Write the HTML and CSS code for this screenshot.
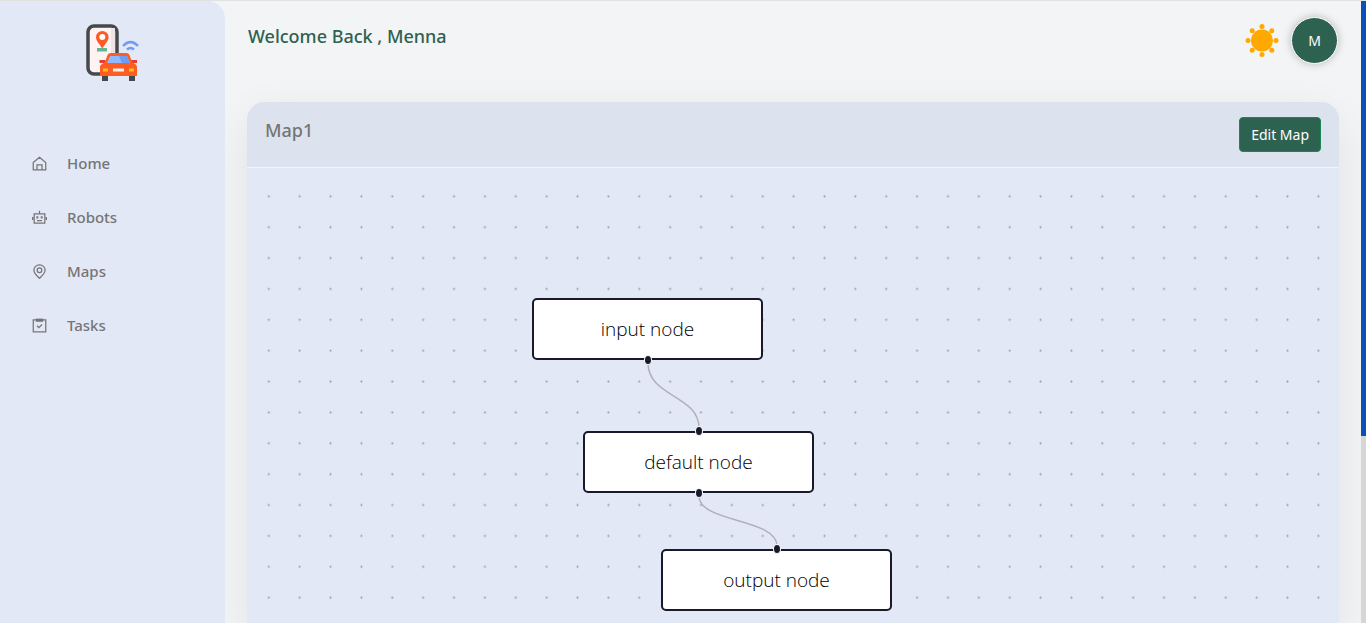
FILE: index.html
```html
<!DOCTYPE html>
<html lang="en">
<head>
<meta charset="utf-8">
<meta name="viewport" content="width=device-width, initial-scale=1">
<title>Map1</title>
<link rel="stylesheet" href="styles.css">
</head>
<body>
<div class="app">
  <aside class="sidebar">
    <a class="logo" href="#" aria-label="Dashboard">
      <svg width="54" height="58" viewBox="0 0 54 58">
        <rect x="2" y="2" width="29" height="48" rx="6" fill="#fdf3f3" stroke="#444a4b" stroke-width="3.500"/>
        <path d="M25 4h4v44h-4z" fill="#eee4e6"/>
        <rect x="11" y="24" width="10" height="3.500" fill="#5cb898"/>
        <path d="M16.300 24.500C13 19 10 17 10 13.200a6.300 6.300 0 0 1 12.600 0c0 3.800-3 5.800-6.300 11.300z" fill="#fd5a25"/>
        <circle cx="16.300" cy="13" r="3" fill="#fff"/>
        <path d="M37 22q7.500-8 15 0M41 25.500q3.500-3 7 0" fill="none" stroke="#7199f6" stroke-width="2.500"/>
        <rect x="16" y="48" width="6" height="9" fill="#444a4b"/>
        <rect x="43" y="48" width="6" height="9" fill="#444a4b"/>
        <path d="M13.500 36h6v3h-6zM45 36h6v3h-6z" fill="#e63f32"/>
        <path d="M16 40l3-2 2.500-7q1-2 3-2h16q2 0 3 2l2.500 7 3 2q2 1 2 3v9H14v-9q0-2 2-3z" fill="#fd5d20"/>
        <path d="M21 39l2.500-6q.5-1 1.500-1h15q1 0 1.500 1l2.500 6z" fill="#8fbaff"/>
        <path d="M33 32h7q1 0 1.500 1l2.500 6H36z" fill="#6d9cf7"/>
        <path d="M17 44.500h5v3h-5zM43 44.500h5v3h-5z" fill="#ffbd18"/>
        <rect x="27" y="44.500" width="11" height="3" fill="#fff0ed"/>
      </svg>
    </a>
    <nav class="menu">
      <a class="menu-item" href="#">
        <svg class="icon" viewBox="0 0 24 24"><path d="M2 10.500 12 2l10 8.500V22H2zM8 22v-8h8v8"/></svg>
        Home</a>
      <a class="menu-item" href="#">
        <svg class="icon" viewBox="0 0 24 24"><path d="M3.500 6h17v15h-17zM12 6V1M1 11v5M23 11v5M8 17h8"/><path class="solid" d="M7 10h3v3.500H7zM14 10h3v3.500h-3z"/></svg>
        Robots</a>
      <a class="menu-item" href="#">
        <svg class="icon" viewBox="0 0 24 24"><path d="M12 23C7 18 3 14.500 3 9.800a9 8.500 0 0 1 18 0C21 14.500 17 18 12 23z"/><circle cx="12" cy="10" r="3.700"/></svg>
        Maps</a>
      <a class="menu-item" href="#">
        <svg class="icon" viewBox="0 0 24 24"><path d="M2 3h20v19H2zM8 12.500l3 3 5-5"/><path class="solid" d="M6 1h12v5H6z"/></svg>
        Tasks</a>
    </nav>
  </aside>
  <main class="content">
    <header class="topbar">
      <h1 class="welcome">Welcome Back , Menna</h1>
      <div class="actions">
        <button class="theme" type="button" aria-label="Toggle theme">
          <svg width="34" height="34" viewBox="0 0 34 34" fill="#ffa800">
            <circle cx="17" cy="16.500" r="11"/>
            <circle cx="17" cy="2.500" r="2.500"/><circle cx="17" cy="30.500" r="2.500"/>
            <circle cx="3" cy="16.500" r="2.500"/><circle cx="31" cy="16.500" r="2.500"/>
            <circle cx="7.200" cy="6.700" r="2.500"/><circle cx="26.800" cy="6.700" r="2.500"/>
            <circle cx="7.200" cy="26.300" r="2.500"/><circle cx="26.800" cy="26.300" r="2.500"/>
          </svg>
        </button>
        <button class="avatar" type="button">M</button>
      </div>
    </header>
    <section class="card">
      <div class="card-head">
        <h2 class="card-title">Map1</h2>
        <button class="edit" type="button">Edit Map</button>
      </div>
      <div class="canvas">
        <svg class="layer" width="100%" height="100%">
          <defs>
            <pattern id="dots" x="6.400" y="12.900" width="30.870" height="30.870" patternUnits="userSpaceOnUse">
              <circle cx="15.430" cy="15.430" r="1" fill="#9494a3"/>
            </pattern>
          </defs>
          <rect width="100%" height="100%" fill="url(#dots)"/>
          <g fill="none" stroke="#b1b1b7" stroke-width="1.500">
            <path d="M401 195C401 229 452 227 452 260"/>
            <path d="M452 328C452 355 530 350 530 378"/>
          </g>
        </svg>
        <div class="node node-input">input node<span class="handle handle-bottom"></span></div>
        <div class="node node-default"><span class="handle handle-top"></span>default node<span class="handle handle-bottom"></span></div>
        <div class="node node-output"><span class="handle handle-top"></span>output node</div>
      </div>
    </section>
  </main>
  <div class="scroll-track"><div class="scroll-thumb"></div></div>
</div>
</body>
</html>
```
FILE: styles.css
```css
* { box-sizing: border-box; }

body {
  margin: 0;
  background: #f2f4f6;
  color: #757575;
  font-family: "Noto Sans", "Open Sans", sans-serif;
}

button { font: inherit; cursor: pointer; }

.app {
  display: flex;
  height: 100vh;
  overflow: hidden;
  border-top: 1px solid #e0e2df;
}

.sidebar {
  flex: 0 0 225px;
  background: #e2e8f6;
  border-top-right-radius: 18px;
  z-index: 1;
}

.logo {
  display: flex;
  justify-content: center;
  padding-top: 23px;
}

.menu {
  display: flex;
  flex-direction: column;
  gap: 30px;
  padding: 69px 32px 0;
}

.menu-item {
  display: flex;
  align-items: center;
  gap: 20px;
  color: inherit;
  font-size: 15px;
  font-weight: 500;
  line-height: 24px;
  text-decoration: none;
}

.icon {
  width: 15px;
  height: 15px;
  fill: none;
  stroke: #757575;
  stroke-width: 2;
}

.icon .solid { fill: #757575; stroke: none; }

.content {
  flex: 1;
  min-width: 0;
  display: flex;
  flex-direction: column;
  gap: 38px;
  padding: 16px 22px 0;
}

.topbar {
  display: flex;
  justify-content: space-between;
  padding: 0 1px;
}

.welcome {
  margin: 7px 0;
  color: #2d6250;
  font-size: 18px;
  font-weight: 500;
  line-height: 24px;
}

.actions {
  display: flex;
  align-items: center;
  gap: 12px;
}

.theme {
  display: flex;
  padding: 0;
  border: 0;
  background: none;
}

.avatar {
  width: 47px;
  height: 47px;
  padding: 0;
  border: 1px solid #fff;
  border-radius: 50%;
  background: #2d6250;
  box-shadow: 0 0 8px rgba(0, 0, 0, 0.25);
  color: #fff;
  font-size: 14px;
}

.card {
  flex: 1;
  display: flex;
  flex-direction: column;
  border-radius: 18px 18px 0 0;
  background: #e2e8f6;
  box-shadow: 0 16px 48px rgba(0, 0, 0, 0.08);
}

.card-head {
  display: flex;
  align-items: flex-start;
  justify-content: space-between;
  padding: 15px 18px;
  border-bottom: 1px solid #f2f4fa;
  border-radius: 18px 18px 0 0;
  background: #dde3ee;
}

.card-title {
  margin: 1px 0 0;
  font-size: 18px;
  font-weight: 500;
  line-height: 24px;
}

.edit {
  height: 35px;
  padding: 0 11px;
  border: 1px solid #198754;
  border-radius: 4px;
  background: #2d6250;
  color: #fff;
  font-size: 14px;
}

.canvas {
  position: relative;
  flex: 1;
  overflow: hidden;
}

.layer {
  position: absolute;
  inset: 0;
}

.node {
  position: absolute;
  display: flex;
  align-items: center;
  justify-content: center;
  width: 231px;
  height: 62px;
  border: 2px solid #1a192b;
  border-radius: 5px;
  background: #fff;
  color: #000;
  font-family: "Open Sans", "Noto Sans", sans-serif;
  font-size: 19px;
  font-weight: 300;
}

.node-input { left: 285px; top: 130px; }
.node-default { left: 336px; top: 263px; }
.node-output { left: 414px; top: 381px; }

.handle {
  position: absolute;
  left: 110px;
  width: 8px;
  height: 10px;
  border: 1px solid #fff;
  border-radius: 50%;
  background: #1a192b;
}

.handle-top { top: -7px; }
.handle-bottom { bottom: -7px; }

.scroll-track {
  flex: 0 0 5px;
  background: #d6d6d6;
}

.scroll-thumb {
  height: 70%;
  background: #0b4fb9;
}
```
